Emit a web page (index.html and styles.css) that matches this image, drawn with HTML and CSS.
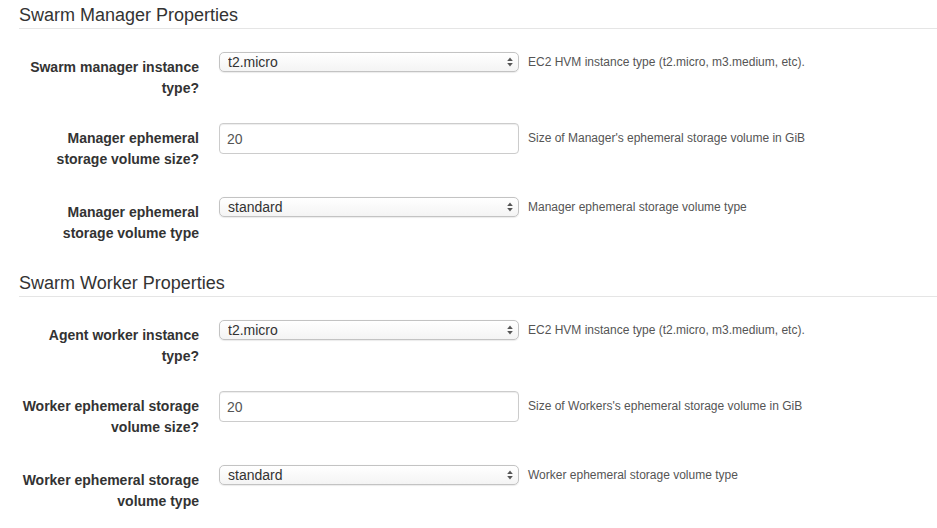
FILE: index.html
```html
<!DOCTYPE html>
<html lang="en">
<head>
<meta charset="utf-8">
<title>Swarm Properties</title>
<link rel="stylesheet" href="styles.css">
</head>
<body>
<div class="page">
  <section class="fieldset">
    <div class="legend">Swarm Manager Properties</div>

    <div class="fg fg-select">
      <label class="lbl">Swarm manager instance type?</label>
      <div class="ctl">
        <span class="sel-wrap">
          <select class="sel"><option>t2.micro</option></select>
          <svg class="arrows" width="6" height="10" viewBox="0 0 6 10"><path d="M3 0.5 L5.8 4 L0.2 4 Z" fill="#555"/><path d="M3 9.5 L5.8 6 L0.2 6 Z" fill="#555"/></svg>
        </span>
        <span class="help">EC2 HVM instance type (t2.micro, m3.medium, etc).</span>
      </div>
    </div>

    <div class="fg fg-input">
      <label class="lbl">Manager ephemeral storage volume size?</label>
      <div class="ctl">
        <input class="inp" type="text" value="20">
        <span class="help">Size of Manager's ephemeral storage volume in GiB</span>
      </div>
    </div>

    <div class="fg fg-select">
      <label class="lbl">Manager ephemeral storage volume type</label>
      <div class="ctl">
        <span class="sel-wrap">
          <select class="sel"><option>standard</option></select>
          <svg class="arrows" width="6" height="10" viewBox="0 0 6 10"><path d="M3 0.5 L5.8 4 L0.2 4 Z" fill="#555"/><path d="M3 9.5 L5.8 6 L0.2 6 Z" fill="#555"/></svg>
        </span>
        <span class="help">Manager ephemeral storage volume type</span>
      </div>
    </div>
  </section>

  <section class="fieldset">
    <div class="legend">Swarm Worker Properties</div>

    <div class="fg fg-select">
      <label class="lbl">Agent worker instance type?</label>
      <div class="ctl">
        <span class="sel-wrap">
          <select class="sel"><option>t2.micro</option></select>
          <svg class="arrows" width="6" height="10" viewBox="0 0 6 10"><path d="M3 0.5 L5.8 4 L0.2 4 Z" fill="#555"/><path d="M3 9.5 L5.8 6 L0.2 6 Z" fill="#555"/></svg>
        </span>
        <span class="help">EC2 HVM instance type (t2.micro, m3.medium, etc).</span>
      </div>
    </div>

    <div class="fg fg-input">
      <label class="lbl">Worker ephemeral storage volume size?</label>
      <div class="ctl">
        <input class="inp" type="text" value="20">
        <span class="help">Size of Workers's ephemeral storage volume in GiB</span>
      </div>
    </div>

    <div class="fg fg-select">
      <label class="lbl">Worker ephemeral storage volume type</label>
      <div class="ctl">
        <span class="sel-wrap">
          <select class="sel"><option>standard</option></select>
          <svg class="arrows" width="6" height="10" viewBox="0 0 6 10"><path d="M3 0.5 L5.8 4 L0.2 4 Z" fill="#555"/><path d="M3 9.5 L5.8 6 L0.2 6 Z" fill="#555"/></svg>
        </span>
        <span class="help">Worker ephemeral storage volume type</span>
      </div>
    </div>
  </section>
</div>
</body>
</html>
```

FILE: styles.css
```css
html, body {
  margin: 0;
  padding: 0;
  background: #fff;
}

body {
  font-family: "Liberation Sans", Arial, Helvetica, sans-serif;
  color: #333;
  font-size: 14px;
}

.page {
  padding-left: 19px;
}

.legend {
  font-size: 18px;
  line-height: 20px;
  padding-top: 5px;
  padding-bottom: 3px;
  border-bottom: 1px solid #e5e5e5;
  margin-bottom: 23px;
  color: #333;
}

.fg {
  display: grid;
  grid-template-columns: 180px auto;
  column-gap: 20px;
  align-items: start;
  margin-bottom: 15px;
}

.fg-select { height: 56px; }
.fg-input { height: 59px; }

.fieldset:last-child .fg:last-child { margin-bottom: 0; }

.lbl {
  font-weight: bold;
  text-align: right;
  line-height: 21px;
  padding-top: 4.5px;
  color: #333;
}

.ctl {
  display: flex;
  align-items: center;
  gap: 9px;
}

.sel-wrap {
  position: relative;
  display: block;
  width: 300px;
  height: 20px;
}

.sel {
  -webkit-appearance: none;
  appearance: none;
  box-sizing: border-box;
  width: 300px;
  height: 20px;
  margin: 0;
  padding: 0 20px 0 8px;
  border: 1px solid #c3c3c3;
  border-radius: 5px;
  background: linear-gradient(#ffffff, #f4f4f4);
  font-family: "Liberation Sans", Arial, Helvetica, sans-serif;
  font-size: 14px;
  line-height: 18px;
  color: #333;
  box-shadow: 0 0.5px 1px rgba(0,0,0,0.08);
}

.arrows {
  position: absolute;
  right: 6px;
  top: 5px;
  pointer-events: none;
}

.inp {
  box-sizing: border-box;
  width: 300px;
  height: 31px;
  margin: 0;
  padding: 0 7px;
  border: 1px solid #ccc;
  border-radius: 4px;
  box-shadow: inset 0 1px 1px rgba(0,0,0,0.075);
  font-family: "Liberation Sans", Arial, Helvetica, sans-serif;
  font-size: 14px;
  color: #555;
  background: #fff;
}

.help {
  font-size: 12px;
  line-height: 17px;
  color: #555;
  white-space: nowrap;
}
```
